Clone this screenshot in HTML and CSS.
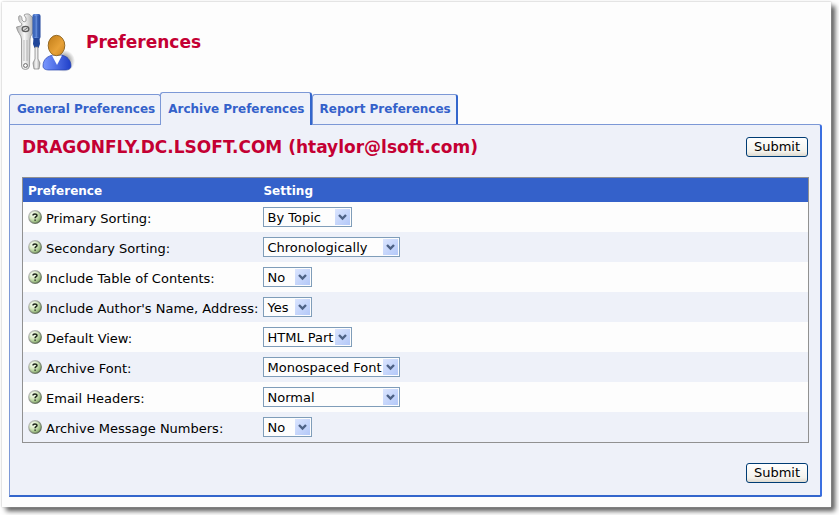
FILE: index.html
```html
<!DOCTYPE html>
<html lang="en">
<head>
    <meta charset="UTF-8">
    <title>Preferences</title>
    <link rel="stylesheet" href="styles.css">
</head>
<body>
    <svg class="sprite" aria-hidden="true">
        <defs>
            <radialGradient id="helpFill" cx="35%" cy="30%" r="75%">
                <stop offset="0" stop-color="#fbfff6"/>
                <stop offset="0.5" stop-color="#cfe3b8"/>
                <stop offset="1" stop-color="#7ba35e"/>
            </radialGradient>
            <linearGradient id="helpRim" x1="0" y1="0" x2="1" y2="1">
                <stop offset="0" stop-color="#d0d0d0"/>
                <stop offset="1" stop-color="#4c5c44"/>
            </linearGradient>
        </defs>
        <symbol id="help" viewBox="0 0 14 14">
            <circle cx="7" cy="7" r="6.3" fill="url(#helpFill)" stroke="url(#helpRim)" stroke-width="1.2"/>
            <path d="M5 5.4C5 3.6 9 3.5 9 5.4C9 6.7 7.1 6.6 7.1 8.2M7.1 9.4V10.8" fill="none" stroke="#1c2418" stroke-width="1.5"/>
        </symbol>
    </svg>

    <div class="window">
        <div class="header">
            <svg class="logo" viewBox="0 0 60 60" aria-hidden="true">
                <defs>
                    <linearGradient id="steel" x1="0" x2="1">
                        <stop offset="0" stop-color="#b0b0b0"/>
                        <stop offset="0.45" stop-color="#f8f8f8"/>
                        <stop offset="1" stop-color="#a2a2a2"/>
                    </linearGradient>
                    <linearGradient id="handle" x1="0" x2="1">
                        <stop offset="0" stop-color="#2450a8"/>
                        <stop offset="0.4" stop-color="#6d96e4"/>
                        <stop offset="1" stop-color="#1c419a"/>
                    </linearGradient>
                    <linearGradient id="head" x1="0" y1="0" x2="1" y2="1">
                        <stop offset="0" stop-color="#c07c18"/>
                        <stop offset="0.6" stop-color="#e8a238"/>
                        <stop offset="1" stop-color="#c98420"/>
                    </linearGradient>
                    <linearGradient id="shirt" x1="0" x2="1">
                        <stop offset="0" stop-color="#7a98ff"/>
                        <stop offset="1" stop-color="#1f3fc8"/>
                    </linearGradient>
                    <radialGradient id="shade">
                        <stop offset="0.4" stop-color="#777" stop-opacity="0.7"/>
                        <stop offset="1" stop-color="#777" stop-opacity="0"/>
                    </radialGradient>
                </defs>
                <path d="M4 4C6 3 7 5 7 8L9 10L11 9V6L9 3C12 1 15 2 16 4C18 5 19 8 19 12V17C19 21 15 23 15 27L14.5 54Q14 57.5 10.5 57.5Q6.5 57.5 6.5 54V27C6.5 23 2 20 1.5 15L6 14L7 12C4 10 3 7 4 4Z" fill="url(#steel)" stroke="#959595" stroke-width="0.9"/>
                <ellipse cx="10.5" cy="17" rx="3.4" ry="2.6" fill="#d8d8d8" stroke="#5c5c5c" stroke-width="1.3"/>
                <path d="M8 19L13 15.5" stroke="#777"/>
                <path d="M9 28V49M12 28V49" stroke="#a8a8a8" stroke-width="0.8"/>
                <circle cx="10.5" cy="53.5" r="1.9" fill="#fff" stroke="#666"/>
                <rect x="17.5" y="2" width="8" height="25" rx="2" fill="url(#handle)"/>
                <path d="M20 4V25M23 4V25" stroke="#214a9e" stroke-width="0.7"/>
                <path d="M18.5 26H24.5L25 32L23.5 36H19.5L18 32Z" fill="#20469a"/>
                <path d="M20 35H23V47L25 51L24 57H19L18 51L20 47Z" fill="url(#steel)" stroke="#808080" stroke-width="0.7"/>
                <ellipse cx="49" cy="49" rx="11" ry="11" fill="url(#shade)"/>
                <path d="M28 54C28 47 33 44 38 43H46C52 44 56 48 56 54C56 57 53 58 50 58H34C31 58 28 57 28 54Z" fill="url(#shirt)" stroke="#2743ad" stroke-width="0.7"/>
                <path d="M37 43.5H47L42 53Z" fill="#fff"/>
                <ellipse cx="41.5" cy="33.5" rx="8.3" ry="10.2" fill="url(#head)" stroke="#8a601c" stroke-width="0.9"/>
            </svg>
            <h1>Preferences</h1>
        </div>

        <div class="tabs">
            <a class="tab" href="#general">General Preferences</a>
            <a class="tab active" href="#archive">Archive Preferences</a>
            <a class="tab" href="#report">Report Preferences</a>
        </div>

        <form class="panel" id="archive">
            <div class="panel-title">
                <h2>DRAGONFLY.DC.LSOFT.COM (htaylor@lsoft.com)</h2>
                <button type="submit">Submit</button>
            </div>

            <table class="settings">
                <thead>
                    <tr><th class="name">Preference</th><th>Setting</th></tr>
                </thead>
                <tbody>
                    <tr>
                        <td class="name"><svg class="help"><use href="#help"/></svg><label for="primary">Primary Sorting:</label></td>
                        <td><select id="primary" class="medium"><option>By Topic</option></select></td>
                    </tr>
                    <tr>
                        <td class="name"><svg class="help"><use href="#help"/></svg><label for="secondary">Secondary Sorting:</label></td>
                        <td><select id="secondary" class="wide"><option>Chronologically</option></select></td>
                    </tr>
                    <tr>
                        <td class="name"><svg class="help"><use href="#help"/></svg><label for="contents">Include Table of Contents:</label></td>
                        <td><select id="contents" class="short"><option>No</option><option>Yes</option></select></td>
                    </tr>
                    <tr>
                        <td class="name"><svg class="help"><use href="#help"/></svg><label for="author">Include Author's Name, Address:</label></td>
                        <td><select id="author" class="short"><option>Yes</option><option>No</option></select></td>
                    </tr>
                    <tr>
                        <td class="name"><svg class="help"><use href="#help"/></svg><label for="view">Default View:</label></td>
                        <td><select id="view" class="medium"><option>HTML Part</option></select></td>
                    </tr>
                    <tr>
                        <td class="name"><svg class="help"><use href="#help"/></svg><label for="font">Archive Font:</label></td>
                        <td><select id="font" class="wide"><option>Monospaced Font</option></select></td>
                    </tr>
                    <tr>
                        <td class="name"><svg class="help"><use href="#help"/></svg><label for="headers">Email Headers:</label></td>
                        <td><select id="headers" class="wide"><option>Normal</option></select></td>
                    </tr>
                    <tr>
                        <td class="name"><svg class="help"><use href="#help"/></svg><label for="numbers">Archive Message Numbers:</label></td>
                        <td><select id="numbers" class="short"><option>No</option><option>Yes</option></select></td>
                    </tr>
                </tbody>
            </table>

            <div class="actions">
                <button type="submit">Submit</button>
            </div>
        </form>
    </div>
</body>
</html>
```

FILE: styles.css
```css
* {
    box-sizing: border-box;
    margin: 0;
    padding: 0;
}

body {
    font-family: Verdana, "DejaVu Sans", sans-serif;
    font-size: 13px;
    color: #000;
    background: #fff;
    padding: 2px 8px 8px 2px;
}

/* Holds the shared help icon, takes no room itself */
.sprite {
    display: block;
    width: 0;
    height: 0;
}

.window {
    background: #fdfdfd;
    padding: 8px 9px 10px 7px;
    box-shadow: 0 0 2px #bbb, 4px 4px 5px #555;
}

.header {
    display: flex;
    align-items: center;
    gap: 11px;
    padding-left: 6px;
    height: 64px;
}

.logo {
    width: 60px;
    height: 60px;
}

h1,
h2 {
    font-size: 17px;
    line-height: 20px;
    color: #c40033;
}

/* Tabs */
.tabs {
    display: flex;
    align-items: flex-end;
    margin-top: 18px;
}

.tab {
    height: 30px;
    padding: 0 5px 0 7px;
    font-size: 12px;
    line-height: 29px;
    font-weight: bold;
    color: #3461ca;
    text-decoration: none;
    white-space: nowrap;
    background: #eef1f9;
    border: 1px solid #7c98d6;
    border-bottom: 0;
    border-radius: 3px 3px 0 0;
}

.tab.active {
    height: 33px;
    margin: 0 0 -1px -1px;
    line-height: 33px;
    border-right: 2px solid #3366cc;
    position: relative;
}

.tab:last-child {
    border-right: 2px solid #3366cc;
}

/* Panel */
.panel {
    background: #eef1f9;
    border: 1px solid #7c98d6;
    border-right: 2px solid #3b6fe0;
    border-bottom: 2px solid #3366cc;
    border-radius: 0 3px 2px 0;
    padding: 12px 11px 12px 12px;
}

.panel-title {
    display: flex;
    justify-content: space-between;
    align-items: center;
    margin-bottom: 20px;
}

.actions {
    display: flex;
    justify-content: flex-end;
    margin-top: 20px;
}

button {
    width: 62px;
    height: 20px;
    margin-right: 1px;
    font: inherit;
    line-height: 16px;
    background: linear-gradient(#fff, #f3f2ec 75%, #dedad0);
    border: 1px solid #003c74;
    border-radius: 3px;
}

/* Settings table */
.settings {
    width: 100%;
    border: 1px solid #919191;
    border-collapse: separate;
    border-spacing: 0;
    background: #fdfdfd;
}

th {
    height: 24px;
    padding: 2px 0 0 5px;
    font-size: 12px;
    text-align: left;
    color: #fff;
    background: #3461ca;
}

.name {
    width: 235px;
}

td {
    height: 30px;
    padding-left: 5px;
    vertical-align: middle;
    white-space: nowrap;
}

td.name {
    padding-top: 2px;
}

tbody tr:nth-child(even) {
    background: #eef1f9;
}

.help {
    width: 14px;
    height: 14px;
    margin-right: 4px;
    vertical-align: -1px;
}

select {
    display: block;
    height: 20px;
    padding: 0 3px;
    font: inherit;
    color: #000;
    border: 1px solid #7f9db9;
    border-radius: 0;
    appearance: none;
    background:
        url("data:image/svg+xml,%3Csvg xmlns='http://www.w3.org/2000/svg' viewBox='0 0 15 16'%3E%3Cpath d='M4 6L7.5 9.5L11 6' fill='none' stroke='%234d6185' stroke-width='2.4'/%3E%3C/svg%3E") right 1px center / 15px 16px no-repeat,
        linear-gradient(135deg, #dbe5fe, #b3c8f8) right 1px center / 15px 16px no-repeat,
        #fdfdfd;
}

.short {
    width: 49px;
}

.medium {
    width: 89px;
}

.wide {
    width: 137px;
}
```
